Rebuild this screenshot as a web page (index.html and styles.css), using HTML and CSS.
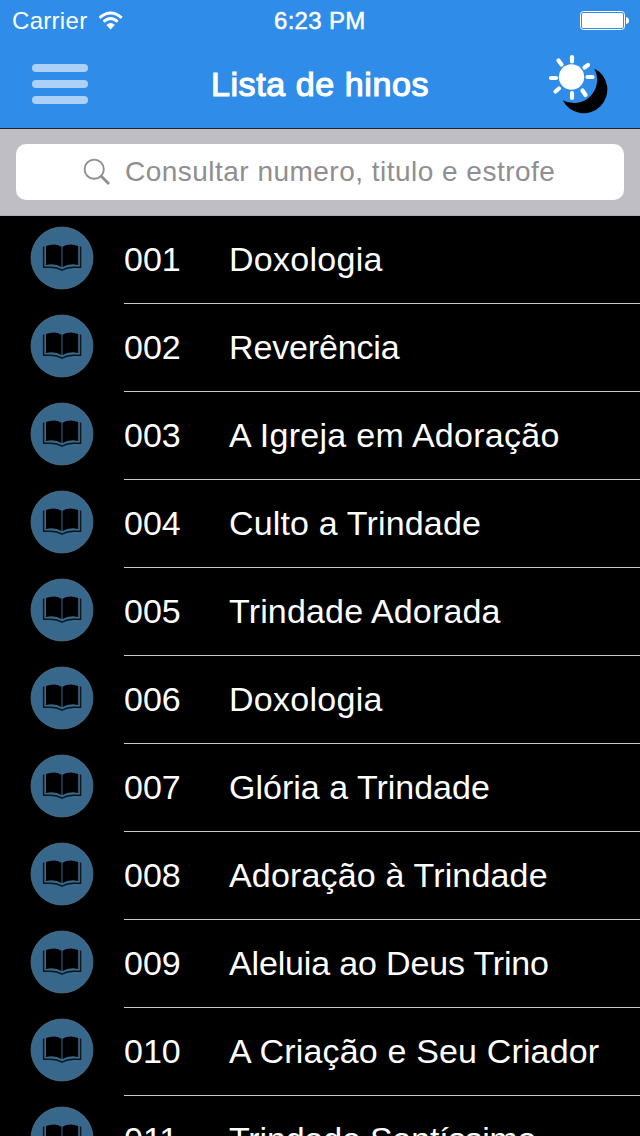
FILE: index.html
```html
<!DOCTYPE html>
<html lang="pt">
<head>
<meta charset="utf-8">
<title>Lista de hinos</title>
<link rel="stylesheet" href="styles.css">
</head>
<body>
<svg class="defs" width="0" height="0">
  <symbol id="book" viewBox="0 0 64 64">
    <circle cx="32" cy="32" r="31" fill="#37678b" stroke="#56758c" stroke-width=".7"/>
    <path d="M13.600 20.500V41.300H21Q27 41.300 32 44.200Q37 41.300 43 41.300H50.600V20.500" fill="none" stroke="#0b151c" stroke-width="1.400"/>
    <path d="M16 20Q25 16.500 31.500 20.800V41Q25 37 16 39ZM32.500 20.800Q39 16.500 48.200 20V39Q39 37 32.500 41Z" fill="#000"/>
  </symbol>
</svg>
<header class="header">
  <div class="status">
    <span class="carrier">Carrier</span>
    <svg class="wifi" width="26" height="20" viewBox="0 0 26 20">
      <path d="M.500 6.800Q11.600 -3 22.700 6.800M4.600 10.800Q11.600 4.200 18.600 10.800" fill="none" stroke="#fff" stroke-width="2.900"/>
      <path d="M7.400 14Q11.600 10.200 15.800 14L11.600 18.500Z" fill="#fff"/>
    </svg>
    <span class="time">6:23 PM</span>
    <svg class="battery" width="50" height="20" viewBox="0 0 50 20">
      <rect x=".5" y=".5" width="44" height="18" rx="3" fill="none" stroke="#fff"/>
      <rect x="2" y="2" width="41" height="15" rx="1.500" fill="#fff"/>
      <path d="M46 6Q49 6.500 49 9.500T46 13Z" fill="#fff"/>
    </svg>
  </div>
  <div class="nav">
    <div class="menu"><i></i><i></i><i></i></div>
    <h1 class="title">Lista de hinos</h1>
    <svg class="daynight" width="60" height="60" viewBox="0 0 60 60">
      <path d="M46.300 14.500A23.400 23.400 0 0 1 14.700 46.300A23.600 23.600 0 1 0 46.300 14.500Z" fill="#000"/>
      <circle cx="23.500" cy="23" r="12.700" fill="#fff"/>
      <path d="M24 3V7.500M24 39V44M3 24H8M39.500 23H44.500M10.500 6.500L13.500 10.500M40 11L36.500 13.500M7.500 37.500L11 34.500M34.500 36.500L37.500 41" stroke="#fff" stroke-width="4.200" stroke-linecap="round"/>
    </svg>
  </div>
</header>
<div class="searchbar">
  <div class="field">
    <svg class="glass" width="28" height="28" viewBox="0 0 28 28">
      <circle cx="11.200" cy="11.200" r="9.600" fill="none" stroke="#8e8e93" stroke-width="1.900"/>
      <path d="M18 18L26 26" stroke="#8e8e93" stroke-width="2.800"/>
    </svg>
    <span class="hint">Consultar numero, titulo e estrofe</span>
  </div>
</div>
<ul class="list">
  <li class="row"><svg class="icon"><use href="#book"/></svg><div class="cell"><span class="num">001</span><span class="name wide">Doxologia</span></div></li>
  <li class="row"><svg class="icon"><use href="#book"/></svg><div class="cell"><span class="num">002</span><span class="name tight">Reverência</span></div></li>
  <li class="row"><svg class="icon"><use href="#book"/></svg><div class="cell"><span class="num">003</span><span class="name wide">A Igreja em Adoração</span></div></li>
  <li class="row"><svg class="icon"><use href="#book"/></svg><div class="cell"><span class="num">004</span><span class="name loose">Culto a Trindade</span></div></li>
  <li class="row"><svg class="icon"><use href="#book"/></svg><div class="cell"><span class="num">005</span><span class="name loose">Trindade Adorada</span></div></li>
  <li class="row"><svg class="icon"><use href="#book"/></svg><div class="cell"><span class="num">006</span><span class="name wide">Doxologia</span></div></li>
  <li class="row"><svg class="icon"><use href="#book"/></svg><div class="cell"><span class="num">007</span><span class="name">Glória a Trindade</span></div></li>
  <li class="row"><svg class="icon"><use href="#book"/></svg><div class="cell"><span class="num">008</span><span class="name loose">Adoração à Trindade</span></div></li>
  <li class="row"><svg class="icon"><use href="#book"/></svg><div class="cell"><span class="num">009</span><span class="name tight">Aleluia ao Deus Trino</span></div></li>
  <li class="row"><svg class="icon"><use href="#book"/></svg><div class="cell"><span class="num">010</span><span class="name loose">A Criação e Seu Criador</span></div></li>
  <li class="row"><svg class="icon"><use href="#book"/></svg><div class="cell"><span class="num">011</span><span class="name tight">Trindade Santíssima</span></div></li>
</ul>
</body>
</html>
```
FILE: styles.css
```css
* { box-sizing: border-box; }
body {
  margin: 0;
  height: 1136px;
  display: flex;
  flex-direction: column;
  overflow: hidden;
  background: #000;
  color: #fff;
  font-family: "Liberation Sans", Arial, sans-serif;
  white-space: nowrap;
}
.defs { display: none; }
svg { display: block; flex: none; }
.header {
  flex: none;
  height: 129px;
  background: #2f8ce9;
  border-bottom: 1px solid #1f2429;
}
.status {
  height: 40px;
  display: grid;
  align-items: center;
  grid-template-columns: 87px 175px 120px 1fr;
  padding: 2px 10px 0 12px;
  font-size: 24px;
  line-height: 38px;
}
.carrier { letter-spacing: .3px; }
.time { letter-spacing: .3px; -webkit-text-stroke: .5px #fff; }
.battery { justify-self: end; }
.nav {
  height: 88px;
  display: grid;
  grid-template-columns: 1fr auto 1fr;
  align-items: center;
  padding: 0 32px;
}
.menu { display: flex; flex-direction: column; gap: 8px; }
.menu i { width: 56px; height: 8px; border-radius: 4px; background: #acd1f6; }
.title {
  margin: 0;
  font-size: 34px;
  line-height: 40px;
  font-weight: 400;
  letter-spacing: .6px;
  -webkit-text-stroke: 1.2px #fff;
}
.daynight { justify-self: end; }
.searchbar {
  flex: none;
  height: 87px;
  padding: 15px 16px 16px;
  background: #bfbec4;
  border-bottom: 1px solid #aeadb3;
}
.field {
  height: 56px;
  border-radius: 10px;
  background: #fff;
  display: flex;
  align-items: center;
  padding-left: 67px;
  gap: 14px;
  color: #8e8e93;
  font-size: 28px;
}
.hint { letter-spacing: .48px; }
.list { list-style: none; margin: 0; padding: 0; }
.row { height: 88px; display: flex; padding-left: 30px; }
.icon { width: 64px; height: 64px; margin: 10px 30px 0 0; }
.cell {
  flex: 1;
  display: flex;
  border-bottom: 1px solid #c8c7cc;
  font-size: 34px;
  line-height: 87px;
}
.num { width: 105px; }
.wide { letter-spacing: .28px; }
.loose { letter-spacing: .16px; }
.tight { letter-spacing: -.16px; }
```
